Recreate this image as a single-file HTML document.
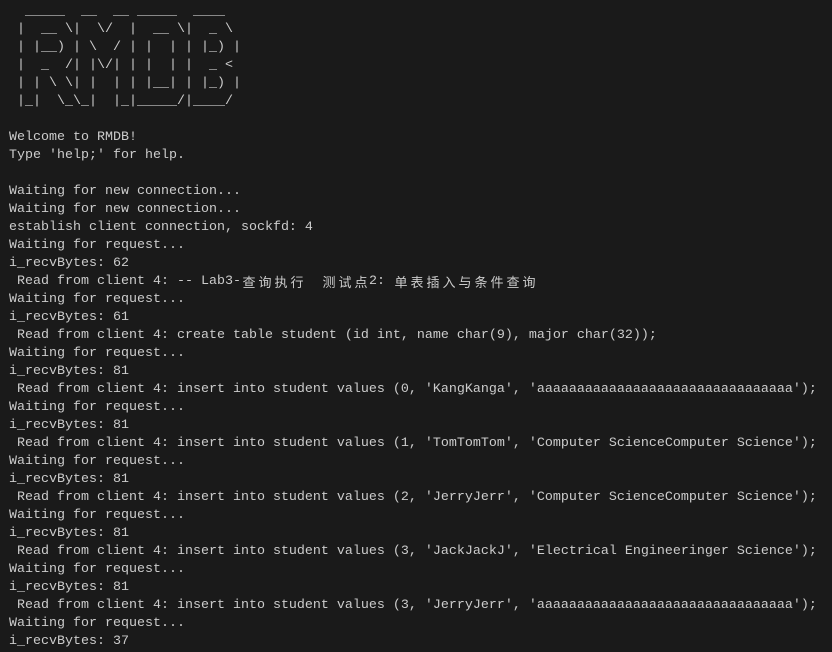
<!DOCTYPE html>
<html><head><meta charset="utf-8"><style>
html,body{margin:0;padding:0;background:#1a1a1a;width:832px;height:652px;overflow:hidden}
pre{margin:0;padding:3px 0 0 9px;font-family:"Liberation Mono","Noto Sans CJK SC",monospace;font-size:13.33px;line-height:18px;color:#cccccc;white-space:pre}
.c{display:inline-block;width:16px;text-align:center;font-family:"Noto Sans CJK SC",sans-serif;font-size:13px;line-height:18px;vertical-align:top}
</style></head><body><pre>  _____  __  __ _____  ____  
 |  __ \|  \/  |  __ \|  _ \ 
 | |__) | \  / | |  | | |_) |
 |  _  /| |\/| | |  | |  _ &lt; 
 | | \ \| |  | | |__| | |_) |
 |_|  \_\_|  |_|_____/|____/ 

Welcome to RMDB!
Type 'help;' for help.

Waiting for new connection...
Waiting for new connection...
establish client connection, sockfd: 4
Waiting for request...
i_recvBytes: 62
 Read from client 4: -- Lab3-<span class="c">查</span><span class="c">询</span><span class="c">执</span><span class="c">行</span>  <span class="c">测</span><span class="c">试</span><span class="c">点</span>2: <span class="c">单</span><span class="c">表</span><span class="c">插</span><span class="c">入</span><span class="c">与</span><span class="c">条</span><span class="c">件</span><span class="c">查</span><span class="c">询</span>
Waiting for request...
i_recvBytes: 61
 Read from client 4: create table student (id int, name char(9), major char(32));
Waiting for request...
i_recvBytes: 81
 Read from client 4: insert into student values (0, 'KangKanga', 'aaaaaaaaaaaaaaaaaaaaaaaaaaaaaaaa');
Waiting for request...
i_recvBytes: 81
 Read from client 4: insert into student values (1, 'TomTomTom', 'Computer ScienceComputer Science');
Waiting for request...
i_recvBytes: 81
 Read from client 4: insert into student values (2, 'JerryJerr', 'Computer ScienceComputer Science');
Waiting for request...
i_recvBytes: 81
 Read from client 4: insert into student values (3, 'JackJackJ', 'Electrical Engineeringer Science');
Waiting for request...
i_recvBytes: 81
 Read from client 4: insert into student values (3, 'JerryJerr', 'aaaaaaaaaaaaaaaaaaaaaaaaaaaaaaaa');
Waiting for request...
i_recvBytes: 37
</pre></body></html>
